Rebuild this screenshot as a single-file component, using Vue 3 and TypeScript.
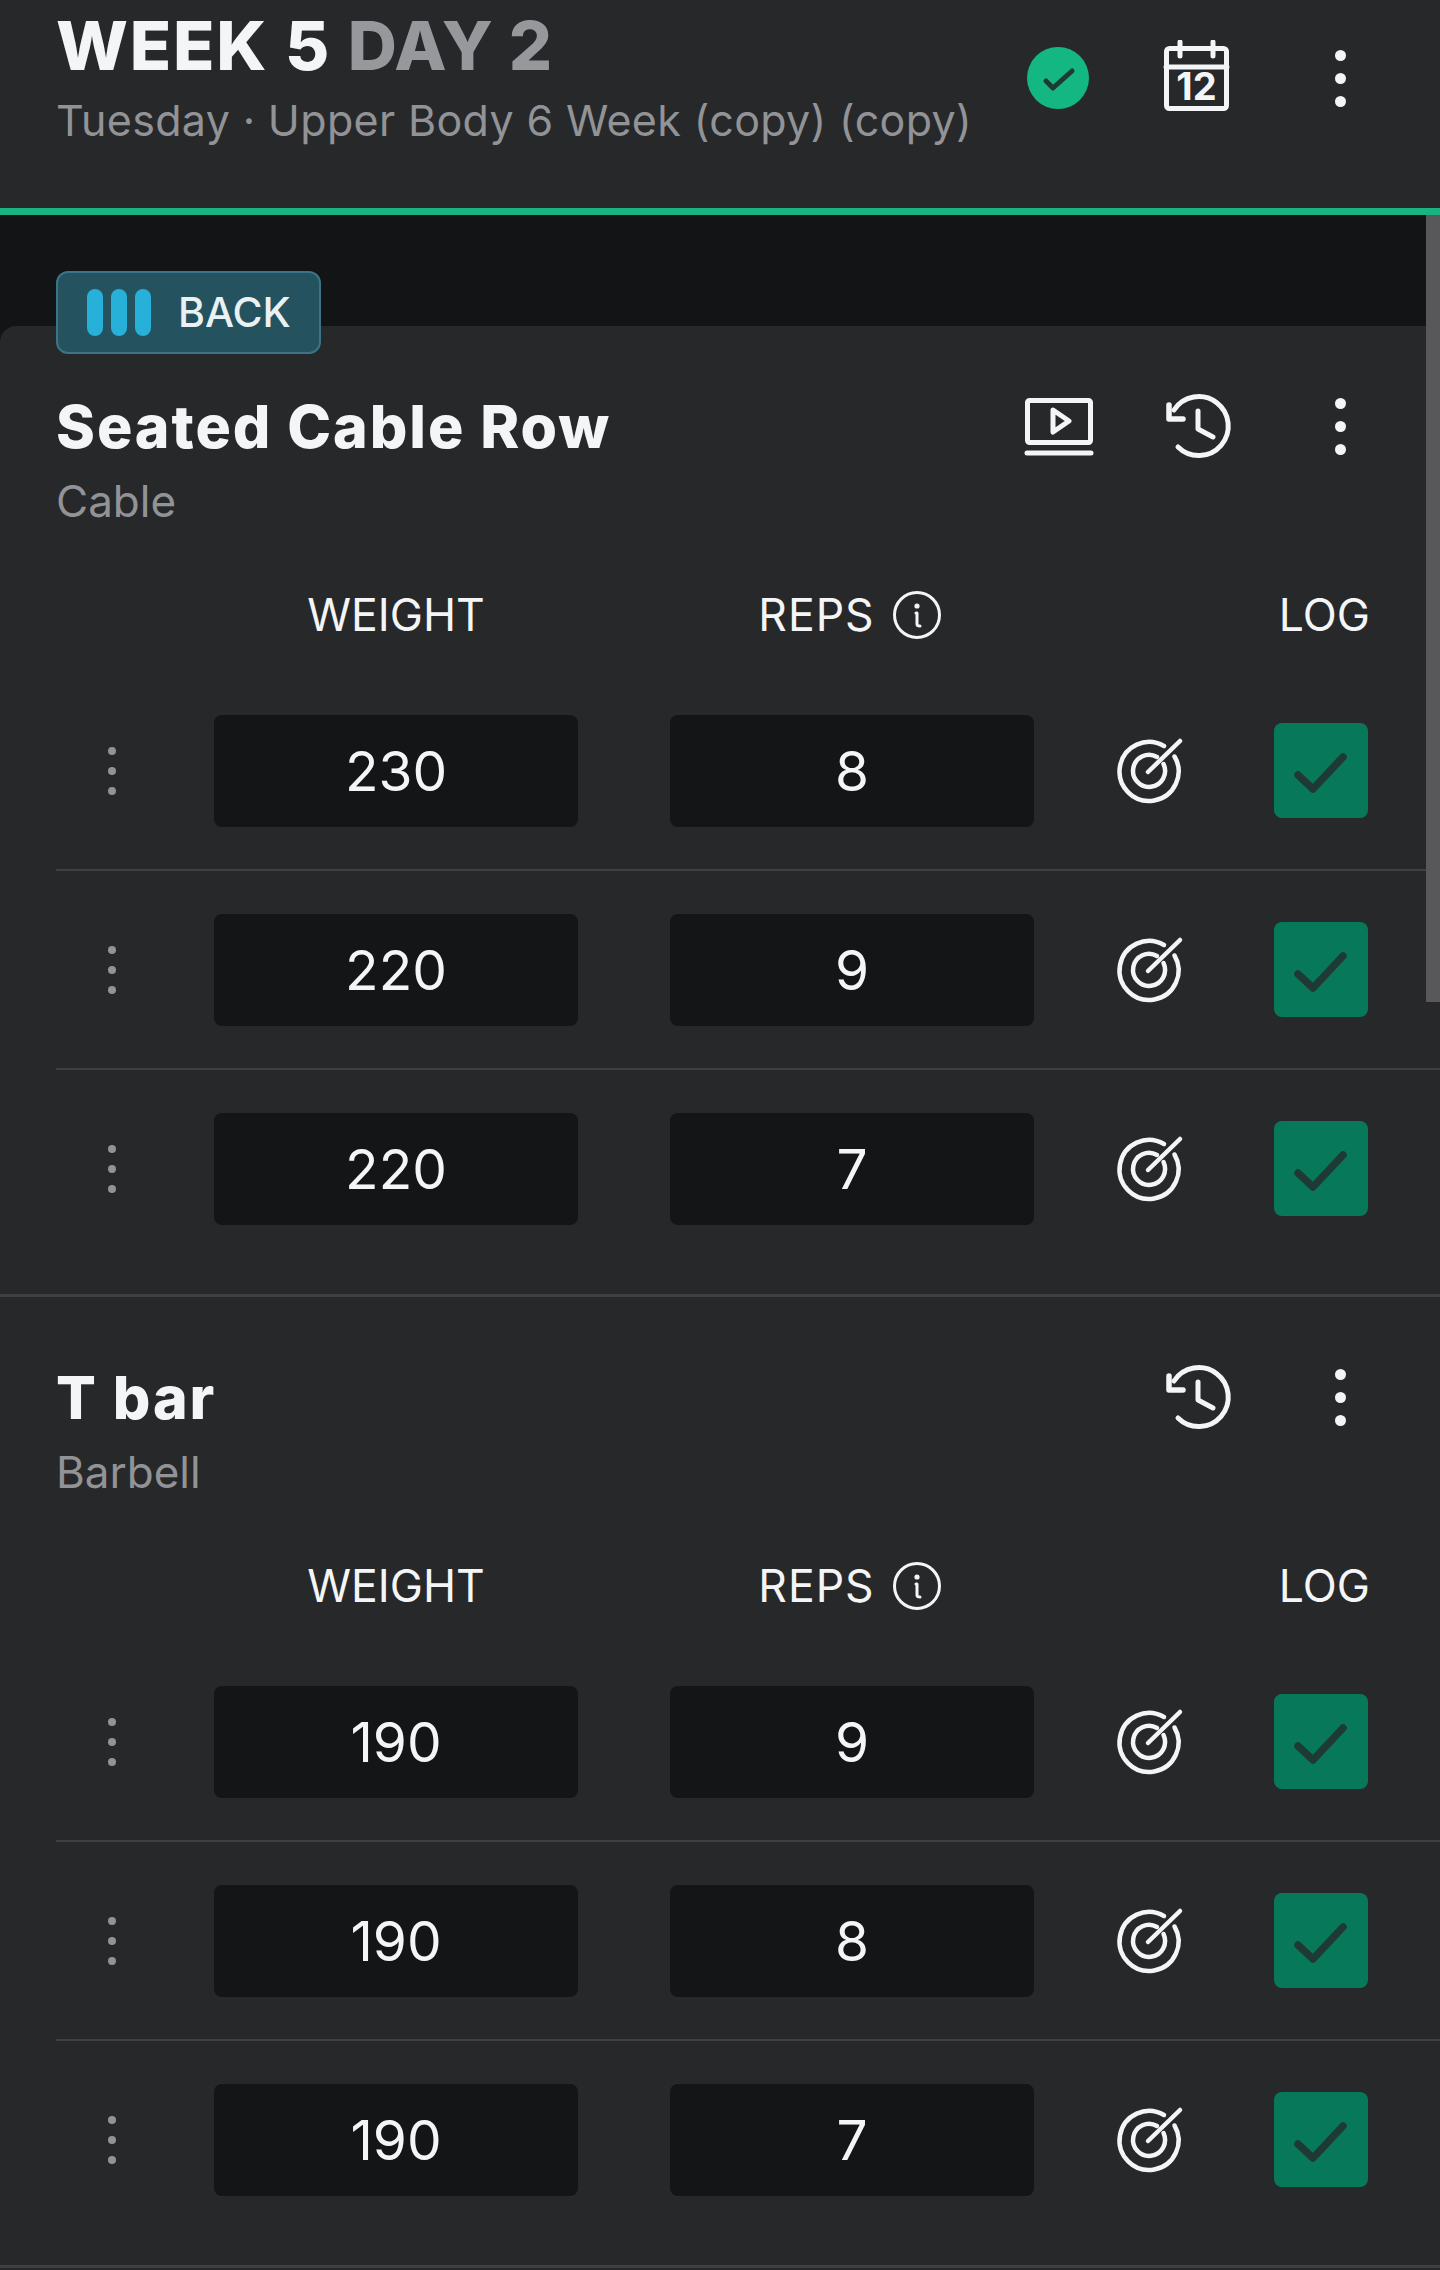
<script setup lang="ts">
interface WorkSet {
  weight: number
  reps: number
}

interface Exercise {
  name: string
  equipment: string
  hasVideo: boolean
  sets: WorkSet[]
}

const exercises: Exercise[] = [
  {
    name: 'Seated Cable Row',
    equipment: 'Cable',
    hasVideo: true,
    sets: [
      { weight: 230, reps: 8 },
      { weight: 220, reps: 9 },
      { weight: 220, reps: 7 },
    ],
  },
  {
    name: 'T bar',
    equipment: 'Barbell',
    hasVideo: false,
    sets: [
      { weight: 190, reps: 9 },
      { weight: 190, reps: 8 },
      { weight: 190, reps: 7 },
    ],
  },
]
</script>

<template>
  <div class="page">
    <header class="top">
      <div class="top-text">
        <h1 class="week">WEEK 5 <span class="day">DAY 2</span></h1>
        <p class="plan">Tuesday · Upper Body 6 Week (copy) (copy)</p>
      </div>
      <div class="top-actions">
        <svg class="done" width="62" height="62" viewBox="-31 -31 62 62">
          <circle r="31" fill="#14b781" />
          <path d="M-12 3 -5 10 14-7" fill="none" stroke="#1c3b33" stroke-width="5" stroke-linecap="round" stroke-linejoin="round" />
        </svg>
        <svg class="cal" width="74" height="76" viewBox="0 0 74 76">
          <rect x="6.5" y="8.5" width="60" height="60" rx="3" fill="none" stroke="#f4f5f7" stroke-width="5" />
          <path d="M6 27H67M20 2V16M53 2V16" fill="none" stroke="#f4f5f7" stroke-width="5" stroke-linecap="round" />
          <text x="36.5" y="60" text-anchor="middle" class="cal-num">12</text>
        </svg>
        <span class="more">
          <i></i><i></i><i></i>
        </span>
      </div>
    </header>

    <main class="body">
      <div class="scrollbar"></div>
      <div class="card">
        <button class="back">
          <span class="bars"><i></i><i></i><i></i></span>
          BACK
        </button>

        <section v-for="ex in exercises" :key="ex.name" class="exercise">
          <div class="ex-head">
            <div>
              <h2 class="ex-name">{{ ex.name }}</h2>
              <p class="ex-type">{{ ex.equipment }}</p>
            </div>
            <div class="ex-actions">
              <svg v-if="ex.hasVideo" class="video" width="76" height="66" viewBox="0 0 76 66">
                <rect x="6.5" y="7.5" width="63" height="42" rx="2" fill="none" stroke="#f4f5f7" stroke-width="5" />
                <path d="M6 60H70" stroke="#f4f5f7" stroke-width="5" stroke-linecap="round" />
                <path d="M32 17 48 28 32 39Z" fill="none" stroke="#f4f5f7" stroke-width="5" stroke-linejoin="round" />
              </svg>
              <svg class="history" width="70" height="70" viewBox="-35 -35 70 70">
                <path d="M-24-16A29.5 29.5 0 1 1-20 21" fill="none" stroke="#f4f5f7" stroke-width="5" stroke-linecap="round" />
                <path d="M-29-21V-7H-15" fill="none" stroke="#f4f5f7" stroke-width="5.5" stroke-linecap="round" stroke-linejoin="round" />
                <path d="M0-15V3L15 11" fill="none" stroke="#f4f5f7" stroke-width="5" stroke-linecap="round" stroke-linejoin="round" />
              </svg>
              <span class="more">
                <i></i><i></i><i></i>
              </span>
            </div>
          </div>

          <div class="labels grid">
            <span class="col-weight">WEIGHT</span>
            <span class="col-reps">
              REPS
              <svg width="48" height="48" viewBox="-24 -24 48 48">
                <circle r="22.5" fill="none" stroke="#f4f5f7" stroke-width="3" />
                <circle cx="0" cy="-9" r="2.6" fill="#f4f5f7" />
                <path d="M-1-2H0V9Q0 11 3 11" fill="none" stroke="#f4f5f7" stroke-width="3" stroke-linecap="round" stroke-linejoin="round" />
              </svg>
            </span>
            <span class="col-log">LOG</span>
          </div>

          <div v-for="(s, i) in ex.sets" :key="i" class="set grid">
            <span class="handle"><i></i><i></i><i></i></span>
            <div class="value col-weight">{{ s.weight }}</div>
            <div class="value col-reps">{{ s.reps }}</div>
            <svg class="target" width="72" height="72" viewBox="-36 -36 72 72">
              <path d="M15-25A29.5 29.5 0 1 0 25.5-14.5" fill="none" stroke="#f4f5f7" stroke-width="4.5" stroke-linecap="round" />
              <path d="M8-14A16 16 0 1 0 14.5-7" fill="none" stroke="#f4f5f7" stroke-width="4.5" stroke-linecap="round" />
              <path d="M-1 1 31-30" fill="none" stroke="#f4f5f7" stroke-width="4.5" stroke-linecap="round" />
            </svg>
            <div class="log">
              <svg width="94" height="95" viewBox="0 0 94 95">
                <path d="M24 52 39 66 69 34" fill="none" stroke="#1f3a34" stroke-width="7.5" stroke-linecap="round" stroke-linejoin="round" />
              </svg>
            </div>
          </div>
        </section>
      </div>
    </main>
  </div>
</template>

<style>
html,
body {
  margin: 0;
  background: #27282a;
}
</style>

<style scoped>
.page {
  width: 1440px;
  height: 2270px;
  overflow: hidden;
  font-family: Inter, "Liberation Sans", sans-serif;
  color: #f4f5f7;
  background: #27282a;
}

.top {
  height: 208px;
  box-sizing: content-box;
  border-bottom: 7px solid #19b382;
  display: flex;
  justify-content: space-between;
  padding: 0 90px 0 56px;
}

.week {
  margin: 6px 0 0 0;
  font-size: 68px;
  line-height: 78px;
  font-weight: 800;
  letter-spacing: 1.8px;
  white-space: nowrap;
}

.day {
  color: #97989b;
  letter-spacing: 0.5px;
}

.plan {
  margin: 10px 0 0 0;
  font-size: 43px;
  line-height: 52px;
  letter-spacing: 0.35px;
  color: #929396;
  white-space: nowrap;
}

.top-actions {
  display: flex;
  align-items: center;
  height: 156px;
}

.cal {
  margin-left: 71px;
}

.cal-num {
  font-family: Inter, "Liberation Sans", sans-serif;
  font-size: 38px;
  font-weight: 700;
  fill: #f4f5f7;
}

.more {
  display: flex;
  flex-direction: column;
  align-items: center;
  gap: 12px;
  width: 20px;
}

.top-actions .more {
  margin-left: 96px;
}

.more i {
  width: 11px;
  height: 11px;
  border-radius: 50%;
  background: #f4f5f7;
}

.body {
  position: relative;
  background: #131416;
  padding-top: 111px;
}

.scrollbar {
  position: absolute;
  top: 0;
  right: 0;
  width: 14px;
  height: 787px;
  background: #58585a;
  z-index: 2;
}

.card {
  position: relative;
  background: #27282a;
  border-top-left-radius: 16px;
}

.back {
  position: absolute;
  left: 56px;
  top: -55px;
  width: 265px;
  height: 83px;
  box-sizing: border-box;
  display: flex;
  align-items: center;
  gap: 27px;
  padding: 0 0 2px 29px;
  border: 2px solid #3b7486;
  border-radius: 12px;
  background: #24535f;
  color: #e9f1f3;
  font-family: inherit;
  font-size: 41px;
  font-weight: 500;
}

.bars {
  display: flex;
  gap: 8px;
  margin-top: 2px;
}

.bars i {
  width: 16px;
  height: 47px;
  border-radius: 8px;
  background: #27b0d8;
}

.exercise {
  padding: 66px 0 27px;
  border-bottom: 3px solid #3f4043;
}

.ex-head {
  display: flex;
  justify-content: space-between;
  padding: 0 90px 0 56px;
}

.ex-name {
  margin: 0;
  font-size: 59px;
  line-height: 70px;
  font-weight: 800;
  letter-spacing: 1.95px;
  white-space: nowrap;
}

.ex-type {
  margin: 9px 0 0 0;
  font-size: 44px;
  line-height: 60px;
  color: #929396;
}

.ex-actions {
  display: flex;
  align-items: center;
  height: 68px;
}

.history {
  margin-left: 66px;
}

.ex-actions .more {
  margin-left: 97px;
}

.grid {
  display: grid;
  grid-template-columns: 158px 364px 456px 240px 94px;
  align-items: center;
  margin-left: 56px;
}

.labels {
  height: 50px;
  margin-top: 59px;
  margin-bottom: 32px;
  font-size: 44.5px;
  line-height: 50px;
}

.labels .col-weight {
  grid-column: 2;
  text-align: center;
}

.labels .col-reps {
  grid-column: 3;
  justify-self: end;
  width: 364px;
  box-sizing: border-box;
  padding-right: 5px;
  display: flex;
  justify-content: center;
  align-items: center;
  gap: 18px;
  letter-spacing: 1px;
}

.labels .col-log {
  grid-column: 5;
  justify-self: end;
  margin-right: -2px;
  white-space: nowrap;
}

.set {
  height: 197px;
  border-bottom: 2px solid #3f4043;
}

.set:last-child {
  border-bottom: 0;
}

.handle {
  display: flex;
  flex-direction: column;
  align-items: center;
  gap: 12px;
  width: 112px;
}

.handle i {
  width: 8px;
  height: 8px;
  border-radius: 50%;
  background: #929396;
}

.value {
  height: 112px;
  border-radius: 8px;
  background: #141517;
  display: flex;
  align-items: center;
  justify-content: center;
  font-size: 55px;
}

.value.col-reps {
  justify-self: end;
  width: 364px;
}

.target {
  justify-self: center;
  margin-right: 10px;
}

.log {
  height: 95px;
  border-radius: 8px;
  background: #07795a;
  display: flex;
}
</style>
